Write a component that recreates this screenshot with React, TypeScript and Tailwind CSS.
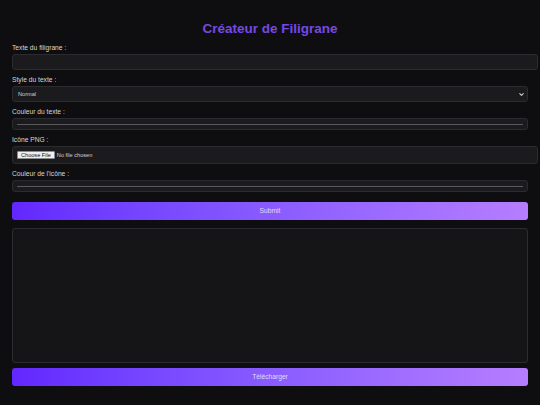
import { ChevronDown } from "lucide-react";

const font = "font-['Liberation_Sans','Arial',sans-serif]";

function Label({ children }: { children: React.ReactNode }) {
    return <div className="mt-[6px] h-[8px] text-[6.7px] leading-[8px] text-[#d6d6d6]">{children}</div>;
}

// Colour picker stand-in: dark box with the thin swatch line across it.
function ColorField() {
    return (
        <div className="mt-[2px] flex h-[12px] w-full items-center rounded-[3px] border border-[#2c2c30] bg-[#1b1b1e] px-[4px] pt-[1px]">
            <div className="h-[1.5px] w-full bg-[#5a5a5e]" />
        </div>
    );
}

function GradientButton({ label, className }: { label: string; className?: string }) {
    return (
        <button
            type="button"
            className={`flex h-[18px] w-full shrink-0 items-center justify-center rounded-[3px] bg-gradient-to-r from-[#6326ff] to-[#b67dff] text-[6.7px] text-[#e4dafc] ${className ?? ""}`}
        >
            {label}
        </button>
    );
}

export default function App() {
    return (
        <div className={`flex min-h-screen flex-col bg-[#0e0e10] px-[12px] ${font}`}>
            <h1 className="pt-[21px] h-[37px] shrink-0 text-center text-[13.5px] font-bold leading-[16px] text-[#7649e4]">
                Créateur de Filigrane
            </h1>

            <div className="mt-[1px]">
                <Label>Texte du filigrane :</Label>
                <div className="mt-[2px] h-[16px] w-[526px] rounded-[3px] border border-[#2c2c30] bg-[#1b1b1e]" />

                <Label>Style du texte :</Label>
                <div className="mt-[2px] flex h-[16px] w-full items-center justify-between rounded-[3px] border border-[#2c2c30] bg-[#1b1b1e] pl-[5px] pr-[2px]">
                    <span className="text-[5.6px] text-[#cfcfcf]">Normal</span>
                    <ChevronDown className="h-[7px] w-[7px] text-[#cfcfcf]" strokeWidth={3.5} />
                </div>

                <Label>Couleur du texte :</Label>
                <ColorField />

                <Label>Icône PNG :</Label>
                <div className="mt-[2px] flex h-[18px] w-[526px] items-center gap-[2px] rounded-[3px] border border-[#2c2c30] bg-[#1b1b1e] pl-[4px]">
                    <span className="flex h-[8px] items-center rounded-[1px] border border-[#8a8a8a] bg-[#efefef] px-[3px] text-[5.6px] text-[#111]">
                        Choose File
                    </span>
                    <span className="text-[5.6px] text-[#d0d0d0]">No file chosen</span>
                </div>

                <Label>Couleur de l'icône :</Label>
                <ColorField />
            </div>

            <GradientButton label="Submit" className="mt-[10px]" />

            <div className="mt-[8px] h-[135px] w-full shrink-0 rounded-[3px] border border-[#2c2c30] bg-[#151517]" />

            <GradientButton label="Télécharger" className="mt-[5px]" />
        </div>
    );
}
